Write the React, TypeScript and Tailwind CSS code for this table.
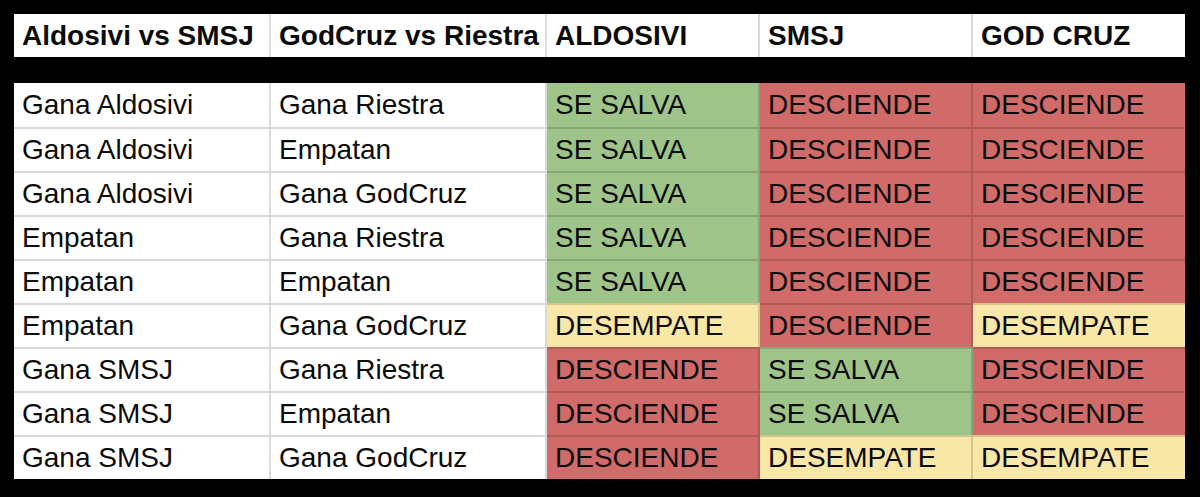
import React from 'react';

type Outcome = 'SE SALVA' | 'DESCIENDE' | 'DESEMPATE';

interface Scenario {
  first: string;
  second: string;
  results: [Outcome, Outcome, Outcome];
}

const headers = ['Aldosivi vs SMSJ', 'GodCruz vs Riestra', 'ALDOSIVI', 'SMSJ', 'GOD CRUZ'];

const scenarios: Scenario[] = [
  { first: 'Gana Aldosivi', second: 'Gana Riestra', results: ['SE SALVA', 'DESCIENDE', 'DESCIENDE'] },
  { first: 'Gana Aldosivi', second: 'Empatan', results: ['SE SALVA', 'DESCIENDE', 'DESCIENDE'] },
  { first: 'Gana Aldosivi', second: 'Gana GodCruz', results: ['SE SALVA', 'DESCIENDE', 'DESCIENDE'] },
  { first: 'Empatan', second: 'Gana Riestra', results: ['SE SALVA', 'DESCIENDE', 'DESCIENDE'] },
  { first: 'Empatan', second: 'Empatan', results: ['SE SALVA', 'DESCIENDE', 'DESCIENDE'] },
  { first: 'Empatan', second: 'Gana GodCruz', results: ['DESEMPATE', 'DESCIENDE', 'DESEMPATE'] },
  { first: 'Gana SMSJ', second: 'Gana Riestra', results: ['DESCIENDE', 'SE SALVA', 'DESCIENDE'] },
  { first: 'Gana SMSJ', second: 'Empatan', results: ['DESCIENDE', 'SE SALVA', 'DESCIENDE'] },
  { first: 'Gana SMSJ', second: 'Gana GodCruz', results: ['DESCIENDE', 'DESEMPATE', 'DESEMPATE'] },
];

const outcomeBg: Record<Outcome, string> = {
  'SE SALVA': 'bg-[#9fc489]',
  DESCIENDE: 'bg-[#d06b69]',
  DESEMPATE: 'bg-[#f8e7a6]',
};

const Cell: React.FC<{ text: string; bg?: string; last?: boolean; top?: boolean; bold?: boolean }> = ({
  text,
  bg = 'bg-white',
  last,
  top,
  bold,
}) => (
  <div
    className={`${bg} flex items-center px-[8px] whitespace-nowrap overflow-hidden border-black/15 ${
      last ? '' : 'border-r-2'
    } ${top ? 'border-t-2' : ''} ${bold ? 'font-bold' : ''}`}
  >
    {text}
  </div>
);

export default function App() {
  return (
    <div className="w-[1200px] h-[497px] bg-black pt-[14px] pl-[14px] font-['Liberation_Sans',Arial,sans-serif] text-[28px] text-[#0b0b0b] leading-none">
      {/* Header */}
      <div className="grid grid-cols-[257px_276px_213px_213px_212px] h-[43px]">
        {headers.map((h, i) => (
          <Cell key={h} text={h} bold last={i === headers.length - 1} />
        ))}
      </div>

      {/* Scenarios */}
      <div className="mt-[26px] grid grid-cols-[257px_276px_213px_213px_212px] auto-rows-[44px]">
        {scenarios.map((s, r) => (
          <React.Fragment key={r}>
            <Cell text={s.first} top={r > 0} />
            <Cell text={s.second} top={r > 0} />
            {s.results.map((o, i) => (
              <Cell key={i} text={o} bg={outcomeBg[o]} top={r > 0} last={i === 2} />
            ))}
          </React.Fragment>
        ))}
      </div>
    </div>
  );
}
